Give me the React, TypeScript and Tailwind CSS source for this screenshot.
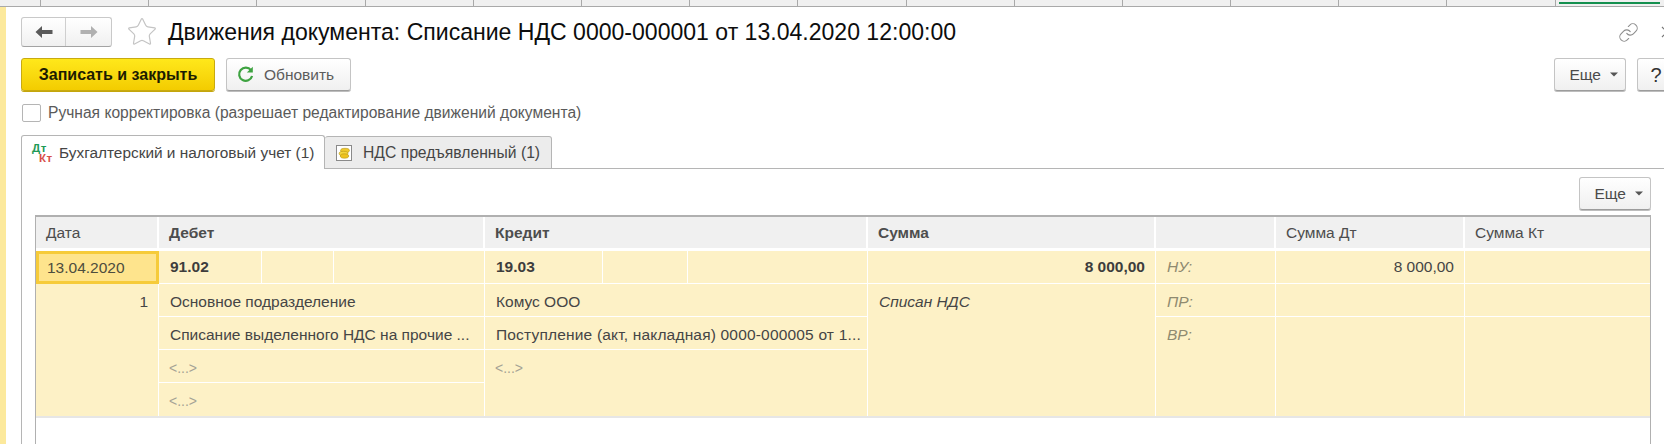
import React from "react";
import { Link as LinkIcon, Star } from "lucide-react";

const topTabs = Array.from({ length: 14 });

const Caret = () => (
  <svg width="8" height="5" viewBox="0 0 8 5" className="ml-[9px]">
    <path d="M0 0.5h8L4 4.5z" fill="#555" />
  </svg>
);

const MoreButton = ({ className }: { className: string }) => (
  <button className={`flex items-center justify-end pr-[7px] w-[72px] h-[33px] text-[15.5px] text-[#4b4b4b] rounded-[3px] border border-[#c4c4c4] border-b-[#9c9c9c] bg-gradient-to-b from-white to-[#f0f0f0] shadow-[0_1px_0_#bdbdbd] ${className}`}>
    Еще
    <Caret />
  </button>
);

const NavArrow = ({ color, flip }: { color: string; flip?: boolean }) => (
  <svg width="18" height="14" viewBox="0 0 18 14" className={flip ? "rotate-180" : ""}>
    <path d="M0.5 7L7 1v4h10.5v4H7v4z" fill={color} />
  </svg>
);

const HeadCell = ({ children, bold, last }: { children?: React.ReactNode; bold?: boolean; last?: boolean }) => (
  <div className={`flex items-center pl-[10px] bg-[#f0f0f0] border-b-[3px] border-b-white h-[34px] text-[#4d4d4d] ${bold ? "font-bold" : ""} ${last ? "" : "border-r-2 border-r-white"}`}>
    {children}
  </div>
);

const SplitRow = ({ code, a, b }: { code: string; a: string; b: string }) => (
  <div className="flex border-r border-b border-white font-bold text-[#3d3d3d]">
    <div className={`${a} flex items-center pl-[11px] border-r border-white`}>{code}</div>
    <div className={`${b} border-r border-white`} />
    <div className="flex-1" />
  </div>
);

const Cell = ({ children, className = "" }: { children?: React.ReactNode; className?: string }) => (
  <div className={`border-r border-b border-white px-[11px] pt-[6px] whitespace-nowrap overflow-hidden text-[#454545] ${className}`}>{children}</div>
);

const Placeholder = () => <span className="inline-block -ml-px text-[#a5a395] text-[14px]">&lt;...&gt;</span>;

export default function App() {
  return (
    <div className="w-[1664px] h-[444px] overflow-hidden bg-white text-[15.5px] font-['Liberation_Sans',Arial,sans-serif]">
      {/* window tabs strip */}
      <div className="flex h-[7px] pl-[40px] bg-[#f0f0f0] border-b border-[#a9a9a9]">
        {topTabs.map((_, i) => (
          <div key={i} className="w-[108.2px] shrink-0 border-l border-[#a9a9a9]" />
        ))}
        <div className="flex-1 border-l border-[#a9a9a9] pl-[3px]">
          <div className="w-[101px] h-[2px] mt-[2px] bg-[#15904f]" />
        </div>
      </div>

      <div className="flex h-[437px]">
        <div className="w-[6px] bg-[#fce99c] shrink-0" />

        <div className="w-[1690px] shrink-0 pt-[10px] pl-[15px]">
          {/* title line */}
          <div className="flex items-center h-[30px]">
            <div className="flex w-[91px] h-[30px] rounded-[3px] border border-[#c9c9c9] border-b-[#a3a3a3] bg-gradient-to-b from-white to-[#f0f0f0]">
              <div className="w-[44px] flex items-center justify-center border-r border-[#cfcfcf]">
                <NavArrow color="#5a5a5a" />
              </div>
              <div className="flex-1 flex items-center justify-center">
                <NavArrow color="#b0b0b0" flip />
              </div>
            </div>
            <Star size={32} strokeWidth={0.9} className="ml-[14px] text-[#c4c4c4]" />
            <h1 className="ml-[10px] text-[23.05px] text-[#0d0d0d] whitespace-nowrap">Движения документа: Списание НДС 0000-000001 от 13.04.2020 12:00:00</h1>
            <LinkIcon size={21} strokeWidth={1.2} className="ml-auto text-[#8c8c8c]" />
            <svg width="12" height="12" viewBox="0 0 12 12" className="ml-[22px] mr-[23px]">
              <path d="M1 1l10 10M11 1L1 11" stroke="#777" strokeWidth="1.2" fill="none" />
            </svg>
          </div>

          {/* command bar */}
          <div className="flex items-center mt-[11px] h-[33px]">
            <button className="w-[194px] h-[33px] rounded-[3px] border border-[#c8aa10] bg-gradient-to-b from-[#ffe81a] to-[#f3cc00] shadow-[0_1px_0_#c4a60c] font-bold text-[16px] text-[#1c1c00]">
              Записать и закрыть
            </button>
            <button className="flex items-center ml-[11px] w-[125px] h-[33px] pl-[10px] rounded-[3px] border border-[#c4c4c4] border-b-[#9c9c9c] bg-gradient-to-b from-white to-[#f0f0f0] shadow-[0_1px_0_#bdbdbd] text-[15.5px] text-[#5c5c5c]">
              <svg width="17" height="17" viewBox="0 0 17 17" className="mr-[10px]">
                <path d="M14 4.2A6.6 6.6 0 1 0 15.1 10" fill="none" stroke="#3ea341" strokeWidth="2.2" />
                <path d="M9.8 6.6h6V0.8z" fill="#3ea341" />
              </svg>
              Обновить
            </button>
            <MoreButton className="ml-auto" />
            <button className="ml-[11px] mr-[23px] w-[36px] h-[33px] pl-[2px] rounded-[3px] border border-[#c4c4c4] border-b-[#9c9c9c] bg-gradient-to-b from-white to-[#f0f0f0] shadow-[0_1px_0_#bdbdbd] text-[20px] text-[#333]">
              ?
            </button>
          </div>

          {/* manual edit checkbox */}
          <label className="flex items-center mt-[13px] h-[18px] pl-[1px] text-[15.6px] text-[#5a5a5a]">
            <span className="w-[19px] h-[18px] rounded-[2px] border border-[#b5b5b5] bg-white" />
            <span className="ml-[7px]">Ручная корректировка (разрешает редактирование движений документа)</span>
          </label>

          {/* tabs */}
          <div className="flex items-end mt-[13px] h-[34px] border-b border-[#b5b5b5]">
            <div className="flex items-center w-[304px] h-[34px] -mb-px pl-[10px] bg-white rounded-t-[3px] border border-b-0 border-[#b5b5b5] text-[#454545]">
              <div className="flex flex-col w-[20px] shrink-0 text-[11.5px] leading-[10px] tracking-[0.5px] font-bold whitespace-nowrap">
                <span className="text-[#1f9a57]">Дт</span>
                <span className="ml-[7px] text-[#d8504a]">Кт</span>
              </div>
              <span className="ml-[7px] text-[15.4px]">Бухгалтерский и налоговый учет (1)</span>
            </div>
            <div className="flex items-center w-[227px] h-[33px] -mb-px pl-[11px] bg-[#ececec] rounded-t-[3px] border-t border-r border-[#b5b5b5] border-b text-[#454545]">
              <svg width="16" height="16" viewBox="0 0 16 16">
                <rect x="0.5" y="0.5" width="15" height="15" fill="#fff" stroke="#8a8a8a" />
                <ellipse cx="9" cy="5.5" rx="4.4" ry="2.2" fill="#f0c92c" stroke="#b59412" strokeWidth="0.6" />
                <ellipse cx="7.5" cy="8.5" rx="4.4" ry="2.2" fill="#f5d63f" stroke="#b59412" strokeWidth="0.6" />
                <ellipse cx="8.5" cy="11" rx="4.2" ry="2.2" fill="#eec21f" stroke="#b59412" strokeWidth="0.6" />
              </svg>
              <span className="ml-[11px] text-[15.7px]">НДС предъявленный (1)</span>
            </div>
          </div>

          {/* panel */}
          <div className="h-[276px] w-[1630px] border-l border-[#b5b5b5] pl-[13px]">
            <div className="flex justify-end pt-[8px] h-[46px] w-[1616px]">
              <MoreButton className="" />
            </div>

            <div className="w-[1616px] h-[240px] border-t-2 border-x border-[#b0b0b0] border-b-0">
              <div className="grid grid-cols-[123px_326px_383px_288px_120px_189px_1fr] grid-rows-[34px_33px_33px_33px_33px_33px] border-b-2 border-[#e6e6e6] bg-[#fdf1c6]">
                <HeadCell>Дата</HeadCell>
                <HeadCell bold>Дебет</HeadCell>
                <HeadCell bold>Кредит</HeadCell>
                <HeadCell bold>Сумма</HeadCell>
                <HeadCell />
                <HeadCell>Сумма Дт</HeadCell>
                <HeadCell last>Сумма Кт</HeadCell>

                {/* date column */}
                <div className="flex items-center pl-[8px] border-[3px] border-[#f6cb3a] bg-[#fee48d] text-[#4d4d3d]">13.04.2020</div>
                <SplitRow code="91.02" a="w-[103px]" b="w-[72px]" />
                <SplitRow code="19.03" a="w-[118px]" b="w-[85px]" />
                <div className="flex items-center justify-end pr-[10px] border-r border-b border-white font-bold text-[#3d3d3d]">8 000,00</div>
                <div className="flex items-center pl-[11px] border-r border-b border-white italic text-[#8f8a70]">НУ:</div>
                <div className="flex items-center justify-end pr-[10px] border-r border-b border-white text-[#454545]">8 000,00</div>
                <div className="border-b border-white" />

                <div className="row-span-4 border-r border-white pr-[10px] pt-[6px] text-right text-[#454545]">1</div>
                <Cell>Основное подразделение</Cell>
                <Cell>Комус ООО</Cell>
                <Cell className="row-span-4 italic !border-b-0">Списан НДС</Cell>
                <Cell className="italic !text-[#8f8a70]">ПР:</Cell>
                <Cell />
                <div className="border-b border-white" />

                <Cell>Списание выделенного НДС на прочие ...</Cell>
                <Cell className="tracking-[0.18px]">Поступление (акт, накладная) 0000-000005 от 1...</Cell>
                <Cell className="row-span-3 italic !text-[#8f8a70] !border-b-0">ВР:</Cell>
                <Cell className="row-span-3 !border-b-0" />
                <div className="row-span-3" />

                <Cell><Placeholder /></Cell>
                <Cell className="row-span-2 !border-b-0"><Placeholder /></Cell>

                <Cell className="!border-b-0"><Placeholder /></Cell>
              </div>
            </div>
          </div>
        </div>
      </div>
    </div>
  );
}
